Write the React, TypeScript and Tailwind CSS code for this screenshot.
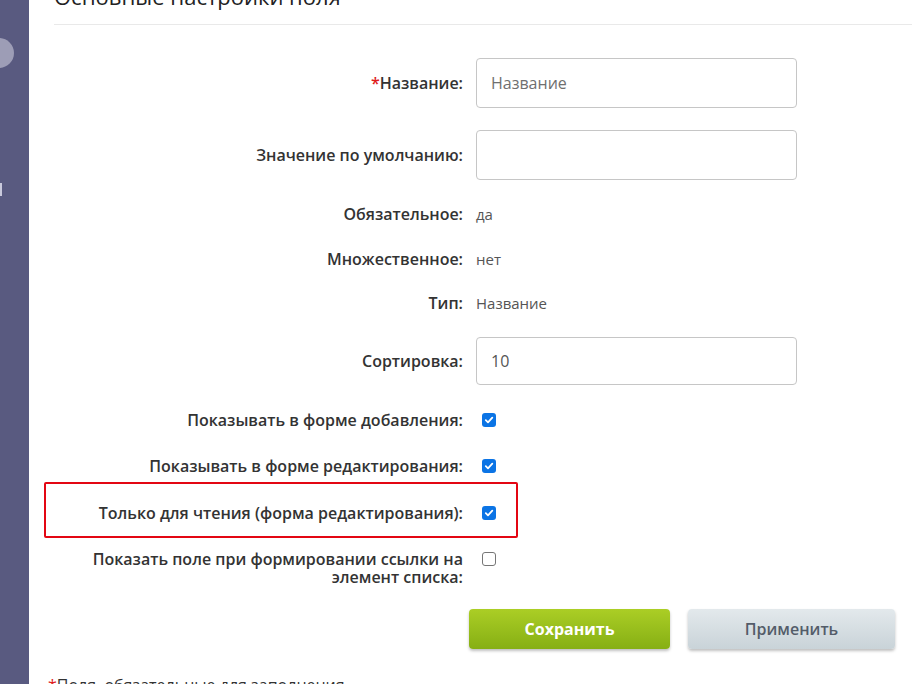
const font = { fontFamily: '"Open Sans", "Noto Sans", sans-serif' };

type Row =
  | { kind: "input"; label: string; required?: boolean; value?: string; placeholder?: string; h: number; top: number }
  | { kind: "text"; label: string; value: string; top: number }
  | { kind: "check"; label: string[]; checked: boolean; top: number; boxed?: boolean };

const ROWS: Row[] = [
  { kind: "input", label: "Название:", required: true, placeholder: "Название", h: 50, top: 33 },
  { kind: "input", label: "Значение по умолчанию:", h: 50, top: 22 },
  { kind: "text", label: "Обязательное:", value: "да", top: 22 },
  { kind: "text", label: "Множественное:", value: "нет", top: 21 },
  { kind: "text", label: "Тип:", value: "Название", top: 20 },
  { kind: "input", label: "Сортировка:", value: "10", h: 48, top: 22 },
  { kind: "check", label: ["Показывать в форме добавления:"], checked: true, top: 23 },
  { kind: "check", label: ["Показывать в форме редактирования:"], checked: true, top: 22 },
  { kind: "check", label: ["Только для чтения (форма редактирования):"], checked: true, top: 23, boxed: true },
  { kind: "check", label: ["Показать поле при формировании ссылки на", "элемент списка:"], checked: false, top: 25 },
];

function Checkbox({ checked }: { checked: boolean }) {
  if (!checked)
    return <span className="ml-[6px] block h-[14px] w-[14px] rounded-[3px] border border-[#767676] bg-white" />;
  return (
    <span className="ml-[6px] flex h-[14px] w-[14px] items-center justify-center rounded-[3px] bg-[#0b74e5]">
      <svg width="10" height="10" viewBox="0 0 10 10">
        <path d="M1.8 5.2 L4 7.3 L8.3 2.6" fill="none" stroke="white" strokeWidth="1.8" strokeLinecap="round" strokeLinejoin="round" />
      </svg>
    </span>
  );
}

function FormRow({ row }: { row: Row }) {
  const label =
    row.kind === "check" ? (
      row.label.map((l) => <div key={l}>{l}</div>)
    ) : (
      <>
        {row.kind === "input" && row.required && <span className="text-[#e01b1b]">*</span>}
        {row.label}
      </>
    );

  return (
    <div className="relative flex" style={{ marginTop: row.top }}>
      {row.kind === "check" && row.boxed && (
        <div className="pointer-events-none absolute -top-[19px] left-[-10px] h-[56px] w-[474px] rounded-[2px] border-2 border-[#e30613]" />
      )}
      <div
        className={`w-[409px] text-right text-[16px] font-semibold text-[#333] ${
          row.kind === "check" && row.label.length > 1 ? "leading-[18px]" : "leading-[24px]"
        } ${row.kind === "input" ? "flex items-center justify-end" : ""}`}
        style={row.kind === "input" ? { height: row.h } : undefined}
      >
        {row.kind === "input" ? <span>{label}</span> : label}
      </div>
      <div className="ml-[13px]">
        {row.kind === "input" && (
          <div
            className="flex w-[321px] items-center rounded-[4px] border border-[#c6c6c6] px-[14px] text-[16px] text-[#555]"
            style={{ height: row.h }}
          >
            {row.value ?? <span className="text-[#6f6f6f]">{row.placeholder}</span>}
          </div>
        )}
        {row.kind === "text" && <div className="text-[15px] leading-[24px] text-[#555]">{row.value}</div>}
        {row.kind === "check" && (
          <div className={`flex items-center ${row.label.length > 1 ? "h-[18px]" : "h-[24px]"}`}>
            <Checkbox checked={row.checked} />
          </div>
        )}
      </div>
    </div>
  );
}

export default function App() {
  return (
    <div className="flex h-[684px] w-[912px] overflow-hidden bg-white" style={font}>
      <aside className="relative w-[29px] shrink-0 bg-[#595a80]">
        <div className="absolute left-[-16px] top-[38px] h-[30px] w-[30px] rounded-full bg-[#9d9db6]" />
        <div className="absolute left-0 top-[183px] h-[13px] w-[2px] bg-[#c9c9dc]" />
      </aside>

      <main className="flex-1 pl-[25px]">
        <div className="-mt-[16px] h-[41px] border-b border-[#e9e9e9] text-[22px] leading-[24px] text-[#222]">
          Основные настройки поля
        </div>

        {ROWS.map((row, i) => (
          <FormRow key={i} row={row} />
        ))}

        <div className="mt-[23px] flex gap-[18px] pl-[415px]">
          <button className="h-[40px] w-[201px] rounded-[4px] bg-gradient-to-b from-[#abce25] to-[#86af14] text-[16px] font-bold text-white shadow-[0_2px_3px_rgba(0,0,0,0.25)]">
            Сохранить
          </button>
          <button className="h-[40px] w-[207px] rounded-[4px] bg-gradient-to-b from-[#e3e9ec] to-[#c9d3d8] text-[16px] font-semibold text-[#535c69] shadow-[0_2px_3px_rgba(0,0,0,0.25)]">
            Применить
          </button>
        </div>

        <div className="-ml-[6px] mt-[26px] text-[16px] leading-[20px] text-[#333]">
          <span className="text-[#e01b1b]">*</span>Поля, обязательные для заполнения
        </div>
      </main>
    </div>
  );
}
